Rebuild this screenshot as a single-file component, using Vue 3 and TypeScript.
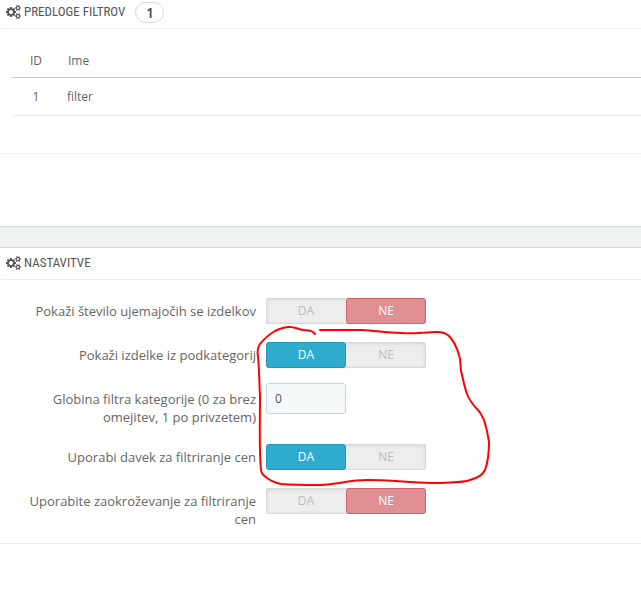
<script setup lang="ts">
import { ref } from 'vue'

interface Setting {
  id: string
  label: string
  kind: 'switch' | 'text'
  value: string
}

interface FilterTemplate {
  id: number
  name: string
}

const templates = ref<FilterTemplate[]>([{ id: 1, name: 'filter' }])

const settings = ref<Setting[]>([
  { id: 'show-count', label: 'Pokaži število ujemajočih se izdelkov', kind: 'switch', value: 'no' },
  { id: 'subcategories', label: 'Pokaži izdelke iz podkategorij', kind: 'switch', value: 'yes' },
  { id: 'depth', label: 'Globina filtra kategorije (0 za brez omejitev, 1 po privzetem)', kind: 'text', value: '0' },
  { id: 'tax', label: 'Uporabi davek za filtriranje cen', kind: 'switch', value: 'yes' },
  { id: 'rounding', label: 'Uporabite zaokroževanje za filtriranje cen', kind: 'switch', value: 'no' },
])
</script>

<template>
  <svg class="defs" aria-hidden="true">
    <symbol id="cogs" viewBox="0 -256 1920 1792">
      <path d="M896 640q0-106-75-181t-181-75-181 75-75 181 75 181 181 75 181-75 75-181zm768 512q0-52-38-90t-90-38-90 38-38 90q0 53 37.5 90.5t90.5 37.5 90.5-37.5 37.5-90.5zm0-1024q0-52-38-90t-90-38-90 38-38 90q0 53 37.5 90.5t90.5 37.5 90.5-37.5 37.5-90.5zm-384 421v185q0 10-7 19.5t-16 10.5l-155 24q-11 35-32 76 34 48 90 115 7 11 7 20 0 12-7 19-23 30-82.5 89.5t-78.5 59.5q-11 0-21-7l-115-90q-37 19-77 31-11 108-23 155-7 24-30 24h-186q-11 0-20-7.5t-10-17.5l-23-153q-34-10-75-31l-118 89q-7 7-20 7-11 0-21-8-144-133-144-160 0-9 7-19 10-14 41-53t47-61q-23-44-35-82l-152-24q-10-1-17-9.5t-7-19.5v-185q0-10 7-19.5t16-10.5l155-24q11-35 32-76-34-48-90-115-7-11-7-20 0-12 7-20 22-30 82-89t79-59q11 0 21 7l115 90q34-18 77-32 11-108 23-154 7-24 30-24h186q11 0 20 7.5t10 17.5l23 153q34 10 75 31l118-89q8-7 20-7 11 0 21 8 144 133 144 160 0 8-7 19-12 16-42 54t-45 60q23 48 34 82l152 23q10 2 17 10.5t7 19.5zm640 533v140q0 16-149 31-12 27-30 52 51 113 51 138 0 4-4 7-122 71-124 71-8 0-46-47t-52-68q-20 2-30 2t-30-2q-14 21-52 68t-46 47q-2 0-124-71-4-3-4-7 0-25 51-138-18-25-30-52-149-15-149-31v-140q0-16 149-31 13-29 30-52-51-113-51-138 0-4 4-7 4-2 35-20t59-34 30-16q8 0 46 46.5t52 67.5q20-2 30-2t30 2q51-71 92-112l6-2q4 0 124 70 4 3 4 7 0 25-51 138 17 23 30 52 149 15 149 31zm0-1024v140q0 16-149 31-12 27-30 52 51 113 51 138 0 4-4 7-122 71-124 71-8 0-46-47t-52-68q-20 2-30 2t-30-2q-14 21-52 68t-46 47q-2 0-124-71-4-3-4-7 0-25 51-138-18-25-30-52-149-15-149-31v-140q0-16 149-31 13-29 30-52-51-113-51-138 0-4 4-7 4-2 35-20t59-34 30-16q8 0 46 46.5t52 67.5q20-2 30-2t30 2q51-71 92-112l6-2q4 0 124 70 4 3 4 7 0 25-51 138 17 23 30 52 149 15 149 31z" />
    </symbol>
  </svg>
  <main class="page">
    <section class="panel first">
      <h3 class="heading">
        <svg class="cogs" aria-hidden="true"><use href="#cogs" /></svg>
        <span>PREDLOGE FILTROV</span>
        <span class="badge">{{ templates.length }}</span>
      </h3>
      <div class="table-wrap">
        <table>
          <thead>
            <tr><th class="id">ID</th><th>Ime</th></tr>
          </thead>
          <tbody>
            <tr v-for="item in templates" :key="item.id">
              <td class="id">{{ item.id }}</td>
              <td>{{ item.name }}</td>
            </tr>
          </tbody>
        </table>
      </div>
      <div class="footer"></div>
    </section>

    <section class="panel second">
      <h3 class="heading">
        <svg class="cogs" aria-hidden="true"><use href="#cogs" /></svg>
        <span>NASTAVITVE</span>
      </h3>
      <form class="form" @submit.prevent>
        <template v-for="item in settings" :key="item.id">
          <div v-if="item.kind === 'switch'" class="row" role="radiogroup" :aria-labelledby="item.id + '-label'">
            <span :id="item.id + '-label'" class="label">{{ item.label }}</span>
            <div class="switch">
              <input :id="item.id + '-yes'" v-model="item.value" type="radio" :name="item.id" value="yes" />
              <label class="yes" :for="item.id + '-yes'">DA</label>
              <input :id="item.id + '-no'" v-model="item.value" type="radio" :name="item.id" value="no" />
              <label class="no" :for="item.id + '-no'">NE</label>
            </div>
          </div>
          <div v-else class="row">
            <label class="label" :for="item.id">{{ item.label }}</label>
            <input :id="item.id" v-model="item.value" class="text" type="text" />
          </div>
        </template>
        <svg class="marker" viewBox="0 0 240 164" aria-hidden="true">
          <path d="M65 9 L63 7 C60 5 56 5 53 5 C48 4 44 2 40 2 C35 2 29 4 25 6 C20 9 14 14 10 19 C8 22 7 26 8 31 C9 41 9 50 10 71 C10 100 9 125 11 145 C11 149 14 151 17 153 C21 156 26 158 31 159 C43 160 57 160 70 160 C88 159 101 155 117 155 C141 155 165 158 190 158 C201 157 212 158 220 155 C228 153 233 149 235 145 C238 137 239 126 239 117 C238 110 236 101 234 95 C232 91 231 88 228 85 C223 80 219 74 217 69 C214 61 213 53 211 46 C210 38 211 35 209 30 C207 23 203 15 199 11 C196 8 191 7 187 7 C175 7 164 9 152 8 C138 8 127 6 113 5 C98 5 84 5 70 5" />
        </svg>
      </form>
      <div class="footer"></div>
    </section>
  </main>
</template>

<style>
body {
  margin: 0;
  background: #eff1f2;
}
</style>

<style scoped>
.page {
  display: flex;
  flex-direction: column;
  gap: 20px;
  min-height: 100vh;
  overflow: hidden;
  font: 13px/18px "Open Sans", sans-serif;
  color: #666;
}
.defs {
  position: absolute;
  width: 0;
  height: 0;
}
.panel {
  display: flex;
  flex-direction: column;
  background: #fff;
}
.first {
  border-bottom: 1px solid #d3d8db;
}
.second {
  flex: 1;
  border-top: 1px solid #d3d8db;
}
.heading {
  display: flex;
  align-items: center;
  gap: 3px;
  height: 31px;
  margin: 0 0 0 1px;
  padding-left: 5px;
  border-bottom: 1px solid #eee;
  font: 400 13px/18px "Roboto Condensed", sans-serif;
  color: #555;
}
.first .heading {
  height: 24px;
  padding-bottom: 4px;
}
.cogs {
  width: 15px;
  height: 14px;
  fill: #555;
}
.badge {
  box-sizing: border-box;
  width: 29px;
  margin-left: 7px;
  border: 1px solid #d5d9dc;
  border-radius: 11px;
  font: 700 14px/19px "Open Sans Condensed", sans-serif;
  text-align: center;
}
.table-wrap {
  padding: 14px 0 37px 12px;
}
table {
  width: 100%;
  border-collapse: collapse;
  font-size: 12px;
}
th,
td {
  box-sizing: border-box;
  padding: 0 7px;
  font-weight: 400;
  text-align: left;
}
th {
  height: 34px;
  padding: 2px 8px 0;
  border-bottom: 1px solid #a0d0eb;
}
td {
  height: 38px;
  padding-top: 2px;
  border-bottom: 1px solid #eaedef;
}
.id {
  width: 48px;
  text-align: center;
}
.footer {
  box-sizing: border-box;
  height: 73px;
  border-top: 1px solid #eee;
  background: #fcfdfe;
}
.second .footer {
  flex: 1 0 60px;
}
.form {
  position: relative;
  display: flex;
  flex-direction: column;
  gap: 15px;
  padding: 15px 0;
}
.row {
  display: grid;
  grid-template-columns: 256px minmax(0, 160px);
  align-items: start;
  gap: 10px;
}
.label {
  padding: 7px 0 0 24px;
  text-align: right;
}
.switch {
  position: relative;
  display: grid;
  grid-template-columns: 1fr 1fr;
  height: 26px;
  margin-top: 3px;
  border-radius: 3px;
  background: #ededed;
  box-shadow: inset 0 0 0 1px #d8d8d8, inset 0 1px 4px #d0d0d0;
}
.switch input {
  position: absolute;
  width: 1px;
  height: 1px;
  margin: 0;
  opacity: 0;
}
.switch label {
  box-sizing: border-box;
  border: 1px solid transparent;
  border-radius: 3px;
  font-size: 12px;
  line-height: 24px;
  text-align: center;
  color: #bbb;
}
.switch input:checked + label {
  color: #fff;
}
.switch input:checked + .yes {
  border-color: #2695b3;
  background: #2eacce;
}
.switch input:checked + .no {
  border-color: #c9646a;
  background: #e08f95;
}
.text {
  box-sizing: border-box;
  width: 80px;
  height: 31px;
  padding: 0 8px;
  border: 1px solid #c7d6db;
  border-radius: 3px;
  background: #f5f8f9;
  font: 12px/18px "Open Sans", sans-serif;
  color: #555;
}
.marker {
  position: absolute;
  top: 45px;
  left: 250px;
  width: 240px;
  height: 164px;
  fill: none;
  stroke: #f00;
  stroke-width: 2;
  stroke-linecap: round;
  stroke-linejoin: round;
  pointer-events: none;
}
</style>
